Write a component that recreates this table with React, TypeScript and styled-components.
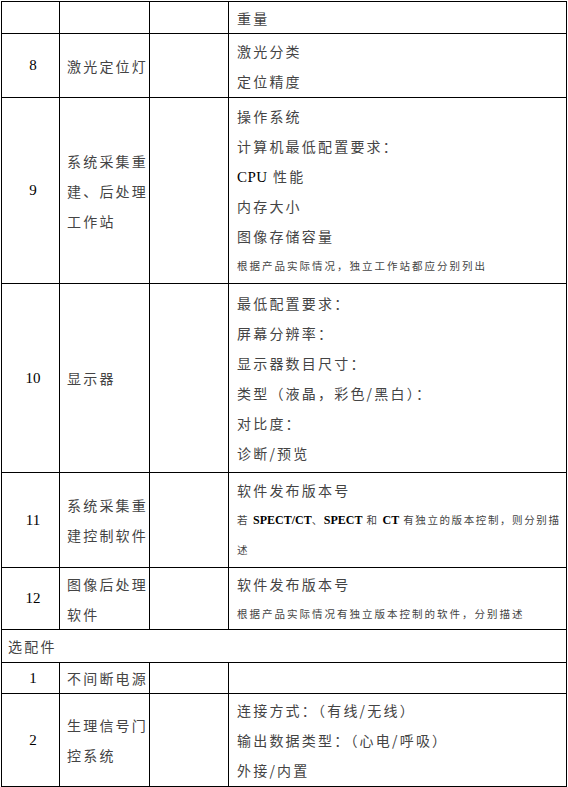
import React from 'react'
import styled, { createGlobalStyle } from 'styled-components'

const GlobalStyle = createGlobalStyle`
  html, body {
    margin: 0;
    padding: 0;
    background: #ffffff;
  }
  body {
    font-family: 'Noto Sans CJK SC', sans-serif;
  }
`

const Page = styled.div`
  padding: 1px 0 0 1px;
  width: 568px;
  box-sizing: border-box;
`

const Table = styled.table`
  border-collapse: collapse;
  table-layout: fixed;
  width: 566px;
  color: #444;
  font-family: 'Liberation Serif', 'Noto Sans CJK SC', serif;
`

const Row = styled.tr<{ $h: number }>`
  height: ${(p) => p.$h}px;
`

const Cell = styled.td`
  border: 1px solid #000;
  padding: 0;
  vertical-align: middle;
  white-space: nowrap;
  overflow: hidden;
`

const NumCell = styled(Cell)`
  text-align: center;
  padding-left: 5px;
  font-family: 'Liberation Serif', serif;
  font-size: 15px;
  color: #000;
`

const NameCell = styled(Cell)`
  padding-left: 7px;
  font-family: 'Noto Sans CJK SC', sans-serif;
  font-size: 14px;
  letter-spacing: 2.2px;
  line-height: 30px;
`

const SpecCell = styled(Cell)`
  padding-left: 8px;
`

const GroupCell = styled(Cell)`
  padding-left: 6px;
  font-family: 'Noto Sans CJK SC', sans-serif;
  font-size: 14px;
  letter-spacing: 2.2px;
`

const Line = styled.div`
  font-family: 'Noto Sans CJK SC', sans-serif;
  font-size: 14px;
  letter-spacing: 2.2px;
  line-height: 30px;
  height: 30px;
`

const Note = styled.div<{ $tight?: boolean }>`
  font-family: 'Noto Sans CJK SC', sans-serif;
  font-size: 10.5px;
  letter-spacing: ${(p) => (p.$tight ? '1.6px' : '2px')};
  line-height: 30px;
  height: 30px;
`

const Latin = styled.span<{ $bold?: boolean }>`
  font-family: 'Liberation Serif', serif;
  color: #000;
  font-size: ${(p) => (p.$bold ? '12px' : '15px')};
  font-weight: ${(p) => (p.$bold ? 700 : 400)};
  letter-spacing: ${(p) => (p.$bold ? '0' : '0.5px')};
`

const App = () => {
  return (
    <Page>
      <GlobalStyle />
      <Table>
        <colgroup>
          <col style={{ width: 58 }} />
          <col style={{ width: 90 }} />
          <col style={{ width: 79 }} />
          <col style={{ width: 338 }} />
        </colgroup>
        <tbody>
          <Row $h={32}>
            <NumCell />
            <NameCell />
            <Cell />
            <SpecCell>
              <Line>重量</Line>
            </SpecCell>
          </Row>
          <Row $h={64}>
            <NumCell>8</NumCell>
            <NameCell>激光定位灯</NameCell>
            <Cell />
            <SpecCell>
              <Line>激光分类</Line>
              <Line>定位精度</Line>
            </SpecCell>
          </Row>
          <Row $h={186}>
            <NumCell>9</NumCell>
            <NameCell>
              系统采集重
              <br />
              建、后处理
              <br />
              工作站
            </NameCell>
            <Cell />
            <SpecCell>
              <Line>操作系统</Line>
              <Line>计算机最低配置要求：</Line>
              <Line>
                <Latin>CPU</Latin> 性能
              </Line>
              <Line>内存大小</Line>
              <Line>图像存储容量</Line>
              <Note>根据产品实际情况，独立工作站都应分别列出</Note>
            </SpecCell>
          </Row>
          <Row $h={189}>
            <NumCell>10</NumCell>
            <NameCell>显示器</NameCell>
            <Cell />
            <SpecCell>
              <Line>最低配置要求：</Line>
              <Line>屏幕分辨率：</Line>
              <Line>显示器数目尺寸：</Line>
              <Line>类型（液晶，彩色/黑白）：</Line>
              <Line>对比度：</Line>
              <Line>诊断/预览</Line>
            </SpecCell>
          </Row>
          <Row $h={95}>
            <NumCell>11</NumCell>
            <NameCell>
              系统采集重
              <br />
              建控制软件
            </NameCell>
            <Cell />
            <SpecCell>
              <Line>软件发布版本号</Line>
              <Note $tight>
                若 <Latin $bold>SPECT/CT</Latin>、<Latin $bold>SPECT</Latin> 和{' '}
                <Latin $bold>CT</Latin> 有独立的版本控制，则分别描
              </Note>
              <Note>述</Note>
            </SpecCell>
          </Row>
          <Row $h={62}>
            <NumCell>12</NumCell>
            <NameCell>
              图像后处理
              <br />
              软件
            </NameCell>
            <Cell />
            <SpecCell>
              <Line>软件发布版本号</Line>
              <Note>根据产品实际情况有独立版本控制的软件，分别描述</Note>
            </SpecCell>
          </Row>
          <Row $h={33}>
            <GroupCell colSpan={4}>选配件</GroupCell>
          </Row>
          <Row $h={30}>
            <NumCell>1</NumCell>
            <NameCell>不间断电源</NameCell>
            <Cell />
            <SpecCell />
          </Row>
          <Row $h={93}>
            <NumCell>2</NumCell>
            <NameCell>
              生理信号门
              <br />
              控系统
            </NameCell>
            <Cell />
            <SpecCell>
              <Line>连接方式：（有线/无线）</Line>
              <Line>输出数据类型：（心电/呼吸）</Line>
              <Line>外接/内置</Line>
            </SpecCell>
          </Row>
        </tbody>
      </Table>
    </Page>
  )
}

export default App
